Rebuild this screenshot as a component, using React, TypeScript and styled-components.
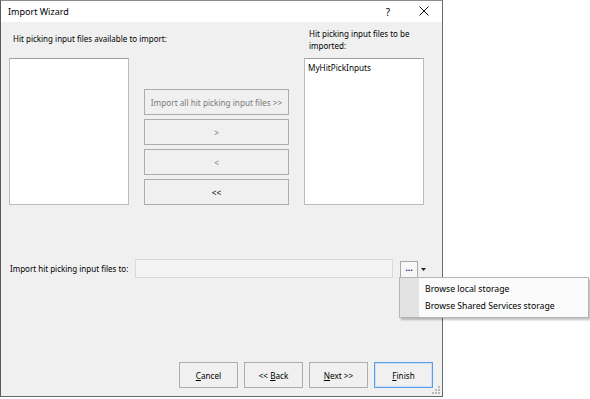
import React from "react";
import styled, { createGlobalStyle } from "styled-components";

const Global = createGlobalStyle`
  html, body { margin: 0; padding: 0; background: #ffffff; }
  body { font-family: "Noto Sans", "Open Sans", sans-serif; font-size: 8px; color: #000; }
`;

const Dialog = styled.div`
  position: relative;
  width: 441px;
  height: 395px;
  border: 1px solid #8c8c8c;
  border-left-color: #5a5a5a;
  border-right-color: #6a6a6a;
  border-bottom-color: #6a6a6a;
  display: flex;
  flex-direction: column;
  background: #f0f0f0;
`;

const TitleBar = styled.div`
  height: 21px;
  background: #ffffff;
  display: flex;
  align-items: center;
  padding-left: 7px;
  font-size: 9px;
  color: #000;
`;

const TitleText = styled.span`
  flex: 1;
`;

const TitleIcon = styled.span<{ $w: number }>`
  width: ${(p) => p.$w}px;
  text-align: center;
  font-size: 10px;
`;

const Body = styled.div`
  flex: 1;
  display: flex;
  flex-direction: column;
  padding: 2px 9px 8px 8px;
`;

const TopGrid = styled.div`
  display: grid;
  grid-template-columns: 120px 145px 120px;
  grid-template-rows: 32px 147px;
  column-gap: 15px;
  row-gap: 2px;
`;

const Label = styled.div<{ $indent?: number; $nowrap?: boolean; $lift?: number }>`
  align-self: center;
  line-height: 12px;
  padding-left: ${(p) => p.$indent ?? 0}px;
  margin-bottom: ${(p) => p.$lift ?? 0}px;
  white-space: ${(p) => (p.$nowrap ? "nowrap" : "normal")};
`;

const ListBox = styled.div`
  background: #fff;
  border: 1px solid #bcbcbc;
  border-top-color: #a0a0a0;
  padding: 3px 3px;
  font-size: 8.2px;
`;

const MiddleCol = styled.div`
  display: flex;
  flex-direction: column;
  justify-content: flex-end;
  gap: 4px;
`;

const Button = styled.button<{ $disabled?: boolean; $focus?: boolean }>`
  height: 26px;
  background: #f0f0f0;
  border: 1px solid ${(p) => (p.$focus ? "#5a9fe6" : "#adadad")};
  box-shadow: ${(p) => (p.$focus ? "inset 0 0 0 1px #c9e0f7" : "none")};
  font-family: inherit;
  font-size: 8.2px;
  color: ${(p) => (p.$disabled ? "#7a7a7a" : "#000")};
  padding: 0;
  margin: 0;
`;

const ImportRow = styled.div`
  margin-top: 53px;
  display: flex;
  align-items: center;
  height: 20px;
`;

const ImportLabel = styled.span`
  width: 125px;
  padding-left: 1px;
  white-space: nowrap;
`;

const PathBox = styled.div`
  width: 256px;
  height: 17px;
  border: 1px solid #d9d9d9;
  background: #f3f3f3;
`;

const BrowseWrap = styled.div`
  position: relative;
  margin-left: 7px;
  display: flex;
  align-items: center;
  padding-top: 2px;
`;

const DotsButton = styled.div`
  width: 16px;
  height: 15px;
  border: 1px solid #a8a8a8;
  background: #f7f7f7;
  font-size: 9px;
  line-height: 12px;
  text-align: center;
  color: #1a1a8c;
  font-weight: bold;
`;

const Caret = styled.svg`
  margin-left: 3px;
`;

const Menu = styled.div`
  position: absolute;
  left: -1px;
  top: 18px;
  width: 188px;
  height: 39px;
  background: #fbfbfb;
  border: 1px solid #b5b5b5;
  box-shadow: 2px 2px 2px rgba(0, 0, 0, 0.25);
  display: flex;
  z-index: 5;
`;

const Gutter = styled.div`
  width: 19px;
  background: #e3e3e3;
`;

const MenuItems = styled.div`
  flex: 1;
  display: flex;
  flex-direction: column;
  padding-left: 6px;
  padding-top: 3px;
`;

const MenuItem = styled.div`
  height: 17px;
  line-height: 17px;
  font-size: 8.7px;
  color: #000;
  white-space: nowrap;
`;

const Spacer = styled.div`
  flex: 1;
`;

const ButtonRow = styled.div`
  display: flex;
  justify-content: flex-end;
  gap: 6px;
`;

const FooterButton = styled(Button)`
  width: 59px;
  height: 26px;
`;

const Grip = styled.svg`
  position: absolute;
  right: 1px;
  bottom: 1px;
`;

const U = styled.span`
  text-decoration: underline;
`;

export default function App() {
  return (
    <>
      <Global />
      <Dialog>
        <TitleBar>
          <TitleText>Import Wizard</TitleText>
          <TitleIcon $w={36}>?</TitleIcon>
          <TitleIcon $w={36}>
            <svg width="10" height="10" viewBox="0 0 10 10">
              <path d="M0.5 0.5 L9.5 9.5 M9.5 0.5 L0.5 9.5" stroke="#111" strokeWidth="1" />
            </svg>
          </TitleIcon>
        </TitleBar>
        <Body>
          <TopGrid>
            <Label $indent={4} $nowrap $lift={3}>Hit picking input files available to import:</Label>
            <div />
            <Label $indent={5}>Hit picking input files to be imported:</Label>
            <ListBox />
            <MiddleCol>
              <Button $disabled>Import all hit picking input files &gt;&gt;</Button>
              <Button $disabled>&gt;</Button>
              <Button $disabled>&lt;</Button>
              <Button>&lt;&lt;</Button>
            </MiddleCol>
            <ListBox>MyHitPickInputs</ListBox>
          </TopGrid>
          <ImportRow>
            <ImportLabel>Import hit picking input files to:</ImportLabel>
            <PathBox />
            <BrowseWrap>
              <DotsButton>...</DotsButton>
              <Caret width="5" height="3" viewBox="0 0 5 3">
                <path d="M0 0 H5 L2.5 3 Z" fill="#222" />
              </Caret>
              <Menu>
                <Gutter />
                <MenuItems>
                  <MenuItem>Browse local storage</MenuItem>
                  <MenuItem>Browse Shared Services storage</MenuItem>
                </MenuItems>
              </Menu>
            </BrowseWrap>
          </ImportRow>
          <Spacer />
          <ButtonRow>
            <FooterButton><U>C</U>ancel</FooterButton>
            <FooterButton>&lt;&lt; <U>B</U>ack</FooterButton>
            <FooterButton><U>N</U>ext &gt;&gt;</FooterButton>
            <FooterButton $focus><U>F</U>inish</FooterButton>
          </ButtonRow>
        </Body>
        <Grip width="10" height="10" viewBox="0 0 10 10">
          <g fill="#b8b8b8">
            <rect x="7" y="1" width="2" height="2" />
            <rect x="4" y="4" width="2" height="2" />
            <rect x="7" y="4" width="2" height="2" />
            <rect x="1" y="7" width="2" height="2" />
            <rect x="4" y="7" width="2" height="2" />
            <rect x="7" y="7" width="2" height="2" />
          </g>
        </Grip>
      </Dialog>
    </>
  );
}
